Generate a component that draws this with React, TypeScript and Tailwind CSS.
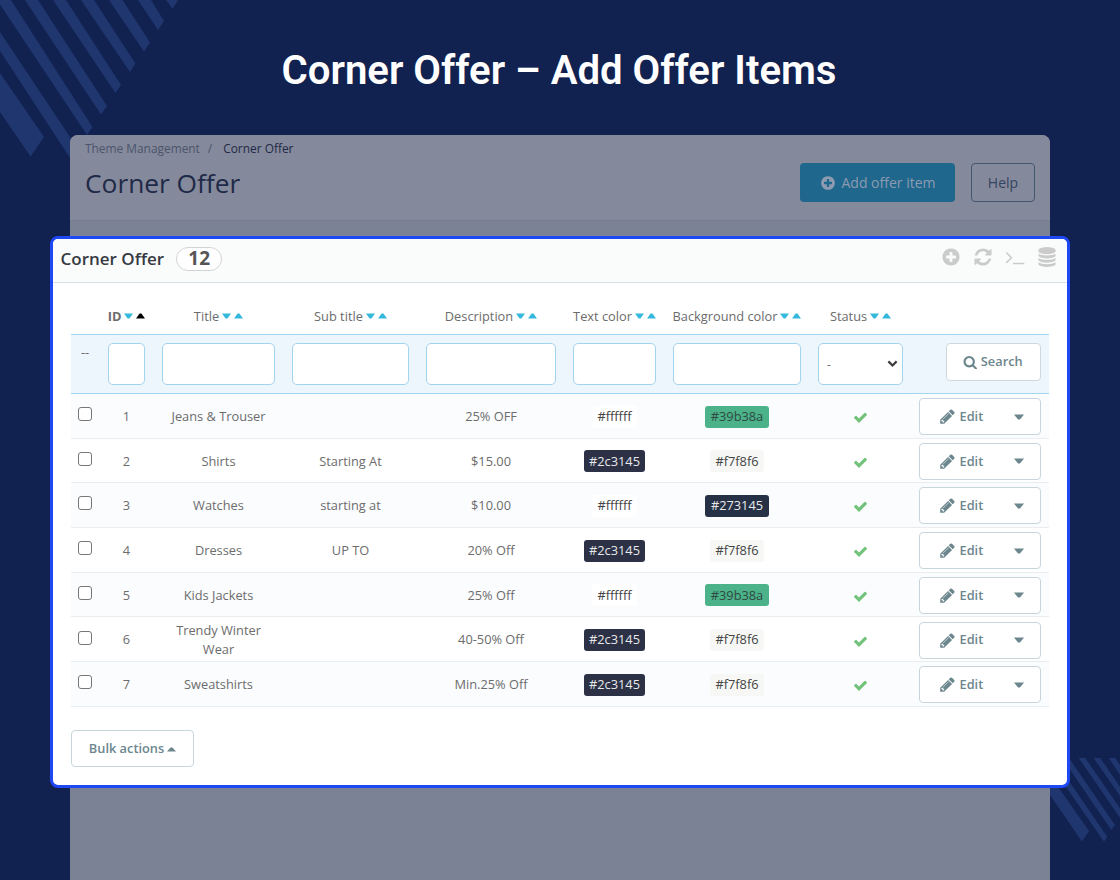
import clsx from 'clsx';

const icons = {
  plus: 'M1344 960v-128q0-26-19-45t-45-19h-256v-256q0-26-19-45t-45-19h-128q-26 0-45 19t-19 45v256h-256q-26 0-45 19t-19 45v128q0 26 19 45t45 19h256v256q0 26 19 45t45 19h128q26 0 45-19t19-45v-256h256q26 0 45-19t19-45zm320-64q0 209-103 385.5t-279.5 279.5-385.5 103-385.5-103-279.5-279.5-103-385.5 103-385.5 279.5-279.5 385.5-103 385.5 103 279.5 279.5 103 385.5z',
  refresh: 'M1639 1056q0 5-1 7-64 268-268 434.5t-478 166.5q-146 0-282.5-55t-243.5-157l-129 129q-19 19-45 19t-45-19-19-45v-448q0-26 19-45t45-19h448q26 0 45 19t19 45-19 45l-137 137q71 66 161 102t187 36q134 0 250-65t186-179q11-17 53-117 8-23 30-23h192q13 0 22.5 9.5t9.5 22.5zm25-800v448q0 26-19 45t-45 19h-448q-26 0-45-19t-19-45 19-45l138-138q-148-137-349-137-134 0-250 65t-186 179q-11 17-53 117-8 23-30 23h-199q-13 0-22.5-9.5t-9.5-22.5v-7q65-268 270-434.5t480-166.5q146 0 284 55.5t245 156.5l130-129q19-19 45-19t45 19 19 45z',
  terminal: 'M649 983l-466 466q-10 10-23 10t-23-10l-50-50q-10-10-10-23t10-23l393-393-393-393q-10-10-10-23t10-23l50-50q10-10 23-10t23 10l466 466q10 10 10 23t-10 23zm1079 457v64q0 14-9 23t-23 9h-960q-14 0-23-9t-9-23v-64q0-14 9-23t23-9h960q14 0 23 9t9 23z',
  database: 'M896 768q237 0 443-43t325-127v170q0 69-103 128t-280 93.5-385 34.5-385-34.5-280-93.5-103-128v-170q119 84 325 127t443 43zm0 768q237 0 443-43t325-127v170q0 69-103 128t-280 93.5-385 34.5-385-34.5-280-93.5-103-128v-170q119 84 325 127t443 43zm0-384q237 0 443-43t325-127v170q0 69-103 128t-280 93.5-385 34.5-385-34.5-280-93.5-103-128v-170q119 84 325 127t443 43zm0-1152q208 0 385 34.5t280 93.5 103 128v128q0 69-103 128t-280 93.5-385 34.5-385-34.5-280-93.5-103-128v-128q0-69 103-128t280-93.5 385-34.5z',
  search: 'M1216 832q0-185-131.5-316.5t-316.5-131.5-316.5 131.5-131.5 316.5 131.5 316.5 316.5 131.5 316.5-131.5 131.5-316.5zm512 832q0 52-38 90t-90 38q-54 0-90-38l-343-342q-179 124-399 124-143 0-273.5-55.5t-225-150-150-225-55.5-273.5 55.5-273.5 150-225 225-150 273.5-55.5 273.5 55.5 225 150 150 225 55.5 273.5q0 220-124 399l343 343q37 37 37 90z',
  check: 'M1671 566q0 40-28 68l-724 724-136 136q-28 28-68 28t-68-28l-136-136-362-362q-28-28-28-68t28-68l136-136q28-28 68-28t68 28l294 295 656-657q28-28 68-28t68 28l136 136q28 28 28 68z',
  pencil: 'M491 1536l91-91-235-235-91 91v107h128v128h107zm523-928q0-22-22-22-10 0-17 7l-542 542q-7 7-7 17 0 22 22 22 10 0 17-7l542-542q7-7 7-17zm-54-192l416 416-832 832h-416v-416zm683 96q0 53-37 90l-166 166-416-416 166-165q36-38 90-38 53 0 91 38l235 234q37 39 37 91z',
};

function Icon({ name, className }: { name: keyof typeof icons; className?: string }) {
  return (
    <svg viewBox="0 0 1792 1792" fill="currentColor" className={clsx('shrink-0', className)}>
      <path d={icons[name]} />
    </svg>
  );
}

function Caret({ up, className }: { up?: boolean; className?: string }) {
  return (
    <svg viewBox="0 0 10 6" fill="currentColor" preserveAspectRatio="none" className={clsx('shrink-0', className)}>
      <path d={up ? 'M0 5.5L4 0.5H6L10 5.5Z' : 'M0 0.5L4 5.5H6L10 0.5Z'} />
    </svg>
  );
}

const columns = ['ID', 'Title', 'Sub title', 'Description', 'Text color', 'Background color', 'Status'];

const DARK = 'bg-[#2c3145] text-[#e8e9ec]';
const LIGHT = 'bg-[#f7f8f6] text-[#444]';
const WHITE = 'bg-white text-[#444]';
const GREEN = 'bg-[#4bb28a] text-[#2f4a41]';
const NAVY = 'bg-[#273145] text-[#e8e9ec]';

const rows = [
  { id: 1, title: 'Jeans & Trouser', sub: '', desc: '25% OFF', text: '#ffffff', textCls: WHITE, bg: '#39b38a', bgCls: GREEN },
  { id: 2, title: 'Shirts', sub: 'Starting At', desc: '$15.00', text: '#2c3145', textCls: DARK, bg: '#f7f8f6', bgCls: LIGHT },
  { id: 3, title: 'Watches', sub: 'starting at', desc: '$10.00', text: '#ffffff', textCls: WHITE, bg: '#273145', bgCls: NAVY },
  { id: 4, title: 'Dresses', sub: 'UP TO', desc: '20% Off', text: '#2c3145', textCls: DARK, bg: '#f7f8f6', bgCls: LIGHT },
  { id: 5, title: 'Kids Jackets', sub: '', desc: '25% Off', text: '#ffffff', textCls: WHITE, bg: '#39b38a', bgCls: GREEN },
  { id: 6, title: 'Trendy Winter Wear', sub: '', desc: '40-50% Off', text: '#2c3145', textCls: DARK, bg: '#f7f8f6', bgCls: LIGHT },
  { id: 7, title: 'Sweatshirts', sub: '', desc: 'Min.25% Off', text: '#2c3145', textCls: DARK, bg: '#f7f8f6', bgCls: LIGHT },
];

const gridCls = 'grid grid-cols-[20px_37px_113px_117px_130px_83px_128px_85px_122px] gap-x-[17px]';
const inputCls = 'h-[42px] w-full rounded-[5px] border border-[#a3d4ee] bg-white';

function ColorTag({ value, className }: { value: string; className: string }) {
  return (
    <span className={clsx('flex h-[22px] items-center rounded-[3px] px-[5.5px]', className)}>{value}</span>
  );
}

function Stripes() {
  return (
    <svg className="absolute inset-0 h-full w-full" viewBox="0 0 1120 880" fill="#20366f">
      <path d="M0 73L44 137L30.5 156.5L0 112Z" />
      <path d="M0 32L82 155L74 164L0 51Z" />
      <path d="M-3 0H11L92.5 127L87 135Z" />
      <path d="M25 0H38L107 106L101 114.5Z" />
      <path d="M53 0H66L121 85L115.5 93Z" />
      <path d="M81 0H94L135.5 63.5L130 72Z" />
      <path d="M109 0H122.5L150 42.5L144 51.5Z" />
      <path d="M138 0H151L164 21L158 30Z" />
      <path d="M166 0H178L172.5 9Z" />
      <path d="M1040 761L1089 831L1082 841.5L1040 780.5Z" />
      <path d="M1046 758H1053L1107.3 836.7L1104 841.7Z" />
      <path d="M1062 758H1069L1115 825L1111.3 830Z" />
      <path d="M1078.7 758H1085.3L1120 808.3V817.7Z" />
      <path d="M1093.7 758H1100.3L1120 787V796Z" />
      <path d="M1108.7 758H1115.3L1120 765V774.7Z" />
    </svg>
  );
}

export default function App() {
  return (
    <div className="relative flex h-[880px] w-[1120px] flex-col overflow-hidden bg-[#112150] font-['Open_Sans',sans-serif]">
      <Stripes />

      <h1 className="relative flex h-[135px] shrink-0 items-center justify-center pr-[2px] pt-[7px] font-['Roboto',sans-serif] text-[40.15px] font-semibold text-white">
        Corner Offer – Add Offer Items
      </h1>

      {/* dimmed page behind the panel */}
      <div className="relative mx-[70px] flex-1 overflow-hidden rounded-t-[8px] bg-[#7b8296]">
        <header className="flex h-[86px] justify-between border-b border-[#787d91] bg-[#85899c] px-[15px]">
          <div>
            <div className="flex pt-[5px] text-[11.9px] leading-[17px] text-[#4b556b]">
              <span>Theme Management</span>
              <span className="pl-[8px] pr-[11px]">/</span>
              <span className="text-[#1e2a47]">Corner Offer</span>
            </div>
            <h2 className="mt-[8px] text-[26.3px] leading-[36px] text-[#1e2a47]">Corner Offer</h2>
          </div>
          <div className="flex gap-[16px] pt-[28px] text-[14px]">
            <button className="flex h-[39px] w-[155px] items-center justify-center gap-[5px] rounded-[4px] bg-[#1f678d] pl-px text-[#8d9bb0]">
              <Icon name="plus" className="size-[16px]" />
              Add offer item
            </button>
            <button className="h-[39px] w-[64px] rounded-[4px] border border-[#435670] text-[#334560]">Help</button>
          </div>
        </header>
      </div>

      {/* highlighted list panel */}
      <section className="absolute left-[50px] top-[236px] flex h-[552px] w-[1020px] flex-col overflow-hidden rounded-[8px] border-[3px] border-[#1f48f5] bg-white text-[12.8px] text-[#6c6c6c]">
        <div className="flex h-[44px] shrink-0 items-center border-b border-[#d5e3e6] bg-[#fafcfc] pb-[4px] pl-[7.5px] pr-[10px]">
          <span className="text-[17px] font-semibold text-[#363a41]">Corner Offer</span>
          <span className="ml-[12px] flex h-[24px] w-[46px] items-center justify-center rounded-full border border-[#d3d3d3] bg-white text-[19px] font-bold text-[#555]">
            12
          </span>
          <div className="ml-auto flex items-center gap-[12px] pb-[3px] text-[#cbcbcb]">
            <Icon name="plus" className="size-[20px]" />
            <Icon name="refresh" className="size-[20px]" />
            <Icon name="terminal" className="size-[20px]" />
            <Icon name="database" className="size-[20px]" />
          </div>
        </div>

        <div className="mx-[18px] mt-[15px]">
          <div className={clsx(gridCls, 'h-[37px] items-center border-b border-[#a3d4ee]')}>
            <span />
            {columns.map((name, i) => (
              <div key={name} className="flex items-center justify-center gap-[3px] whitespace-nowrap">
                <span className={clsx('leading-[20px]', i === 0 && 'font-bold')}>{name}</span>
                <Caret className="h-[6px] w-[9px] text-[#34b9dc]" />
                <Caret up className={clsx('h-[6px] w-[9px]', i === 0 ? 'text-black' : 'text-[#34b9dc]')} />
              </div>
            ))}
          </div>

          <div className={clsx(gridCls, 'h-[59px] border-b border-[#a3d4ee] bg-[#ecf6fc] pt-[8px]')}>
            <span className="pl-[10px]">--</span>
            {columns.slice(0, 6).map((name) => (
              <div key={name} className={inputCls} />
            ))}
            <div className={clsx(inputCls, 'flex items-center justify-between pl-[8px] pr-[4px]')}>
              <span className="pt-px text-[12px]">-</span>
              <svg viewBox="0 0 12 8" fill="none" stroke="#3c3c3c" strokeWidth="2.4" className="w-[11px]">
                <path d="M1.5 1.5L6 6L10.5 1.5" />
              </svg>
            </div>
            <button className="ml-[26px] flex h-[38px] w-[95px] items-center justify-center gap-[3px] rounded-[4px] border border-[#ccdade] bg-white pr-px font-semibold text-[#6c868e]">
              <Icon name="search" className="size-[14.5px]" />
              Search
            </button>
          </div>

          {rows.map((row) => (
            <div
              key={row.id}
              className={clsx(gridCls, 'h-[44.7px] items-center justify-items-center border-b border-[#eaedef] pt-[1.5px] text-center', row.id % 2 === 1 && 'bg-[#fbfcfe]')}
            >
              <span className="mb-[5px] ml-[8px] size-[14px] rounded-[3px] border border-[#777] bg-white" />
              <span>{row.id}</span>
              <span className="w-[100px] leading-[19px]">{row.title}</span>
              <span>{row.sub}</span>
              <span>{row.desc}</span>
              <ColorTag value={row.text} className={row.textCls} />
              <ColorTag value={row.bg} className={row.bgCls} />
              <Icon name="check" className="mr-px mt-[2px] size-[15px] text-[#72c279]" />
              <div className="-ml-[2px] flex h-[37px] w-[122px] items-center rounded-[4px] border border-[#c6d6dc] bg-white font-semibold text-[#6c868e]">
                <Icon name="pencil" className="ml-[18.5px] size-[17px]" />
                <span className="ml-[4px]">Edit</span>
                <Caret className="ml-auto mr-[16px] h-[6px] w-[10px]" />
              </div>
            </div>
          ))}

          <button className="mt-[23px] flex h-[37px] w-[123px] items-center justify-center gap-[3px] rounded-[4px] border border-[#c6d6dc] bg-white font-semibold text-[#6c868e]">
            Bulk actions
            <Caret up className="mt-[3px] h-[5px] w-[9px]" />
          </button>
        </div>
      </section>
    </div>
  );
}
